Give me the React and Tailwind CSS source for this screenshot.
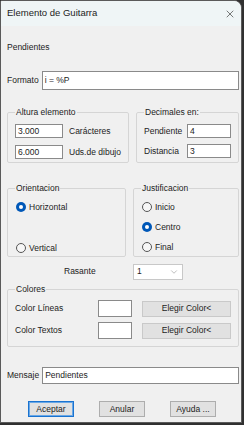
import React from "react";
import { X, ChevronDown } from "lucide-react";

const Group = ({ title, className, children }) => (
  <fieldset className={"border border-[#d5d5d5] rounded-[2px] px-[7px] " + className}>
    <legend className="px-[1px] leading-[12px]">{title}</legend>
    {children}
  </fieldset>
);

const Field = ({ value, className }) => (
  <div className={"bg-white border border-[#8a8a8a] pl-[2px] leading-[12px] " + className}>{value}</div>
);

const Radio = ({ checked, label }) => (
  <div className="flex items-center gap-[3px] h-[12px]">
    {checked ? (
      <div className="w-[10px] h-[10px] rounded-full bg-[#0058b8] flex items-center justify-center">
        <div className="w-[4px] h-[4px] rounded-full bg-white" />
      </div>
    ) : (
      <div className="w-[10px] h-[10px] rounded-full border border-[#555] bg-[#f7f7f7]" />
    )}
    <span>{label}</span>
  </div>
);

const Btn = ({ label, primary }) => (
  <div
    className={
      "w-[46px] h-[16px] flex items-center justify-center bg-[#e1e1e1] leading-none " +
      (primary ? "border border-[#1a73d0] shadow-[inset_0_0_0_1px_#6aa8e6]" : "border border-[#adadad]")
    }
  >
    {label}
  </div>
);

export default function App() {
  return (
    <div className="w-[244px] h-[425px] bg-[#303030] font-['Liberation_Sans',Arial,sans-serif] text-[8.5px] text-[#1c1c1c] whitespace-nowrap">
      <div className="w-[242px] h-[423px] bg-[#f0f0f0] border border-[#5a5a5a] rounded-tr-[8px] rounded-tl-[2px] overflow-hidden flex flex-col">
        <div className="h-[25px] bg-[#eff5f6] flex items-center justify-between pl-[6px] pr-[5px] text-[9.5px]">
          <span>Elemento de Guitarra</span>
          <X size={12} strokeWidth={1.3} className="text-[#333]" />
        </div>

        <div className="flex flex-col pl-[6px] pr-[2px]">
          <div className="mt-[15px] leading-[12px]">Pendientes</div>

          <div className="mt-[18px] flex items-center gap-[3px]">
            <span>Formato</span>
            <div className="flex-1 h-[19px] bg-white border border-[#8a8a8a] pl-[2px] flex items-center">i = %P</div>
          </div>

          <div className="mt-[16px] flex justify-between">
            <Group title="Altura elemento" className="w-[119px] h-[57px]">
              <div className="mt-[6px] flex flex-col gap-[7px]">
                <div className="flex items-center gap-[6px]">
                  <Field value="3.000" className="w-[48px] h-[14px]" />
                  <span>Carácteres</span>
                </div>
                <div className="flex items-center gap-[6px]">
                  <Field value="6.000" className="w-[48px] h-[14px]" />
                  <span>Uds.de dibujo</span>
                </div>
              </div>
            </Group>
            <Group title="Decimales en:" className="w-[103px] h-[57px]">
              <div className="mt-[6px] flex flex-col gap-[6px]">
                <div className="flex items-center justify-between">
                  <span>Pendiente</span>
                  <Field value="4" className="w-[44px] h-[14px]" />
                </div>
                <div className="flex items-center justify-between">
                  <span>Distancia</span>
                  <Field value="3" className="w-[44px] h-[14px]" />
                </div>
              </div>
            </Group>
          </div>

          <div className="mt-[19px] flex justify-between">
            <Group title="Orientacion" className="w-[119px] h-[75px]">
              <div className="mt-[7px] flex flex-col gap-[29px] pl-[1px]">
                <Radio checked label="Horizontal" />
                <Radio label="Vertical" />
              </div>
            </Group>
            <Group title="Justificacion" className="w-[106px] h-[75px]">
              <div className="mt-[7px] flex flex-col gap-[8px] pl-[1px]">
                <Radio label="Inicio" />
                <Radio checked label="Centro" />
                <Radio label="Final" />
              </div>
            </Group>
          </div>

          <div className="mt-[6px] flex items-center h-[17px]">
            <span className="ml-[57px] w-[69px]">Rasante</span>
            <div className="w-[50px] h-[16px] bg-white border border-[#c8c8c8] flex items-center justify-between pl-[3px] pr-[3px]">
              <span>1</span>
              <ChevronDown size={10} strokeWidth={1.3} className="text-[#888]" />
            </div>
          </div>

          <Group title="Colores" className="mt-[3px] h-[64px]">
            <div className="mt-[5px] flex flex-col gap-[5px]">
              <div className="flex items-center">
                <span className="w-[83px]">Color Líneas</span>
                <div className="w-[34px] h-[17px] bg-white border border-[#8a8a8a]" />
                <div className="ml-[10px] w-[89px] h-[16px] bg-[#e1e1e1] border border-[#c9c9c9] flex items-center justify-center">Elegir Color&lt;</div>
              </div>
              <div className="flex items-center">
                <span className="w-[83px]">Color Textos</span>
                <div className="w-[34px] h-[17px] bg-white border border-[#8a8a8a]" />
                <div className="ml-[10px] w-[89px] h-[16px] bg-[#e1e1e1] border border-[#c9c9c9] flex items-center justify-center">Elegir Color&lt;</div>
              </div>
            </div>
          </Group>

          <div className="mt-[20px] flex items-center gap-[3px]">
            <span>Mensaje</span>
            <div className="flex-1 h-[17px] bg-white border border-[#8a8a8a] pl-[2px] flex items-center">Pendientes</div>
          </div>

          <div className="mt-[17px] flex pl-[21px] gap-[25px]">
            <Btn label="Aceptar" primary />
            <Btn label="Anular" />
            <Btn label="Ayuda ..." />
          </div>
        </div>
      </div>
    </div>
  );
}
